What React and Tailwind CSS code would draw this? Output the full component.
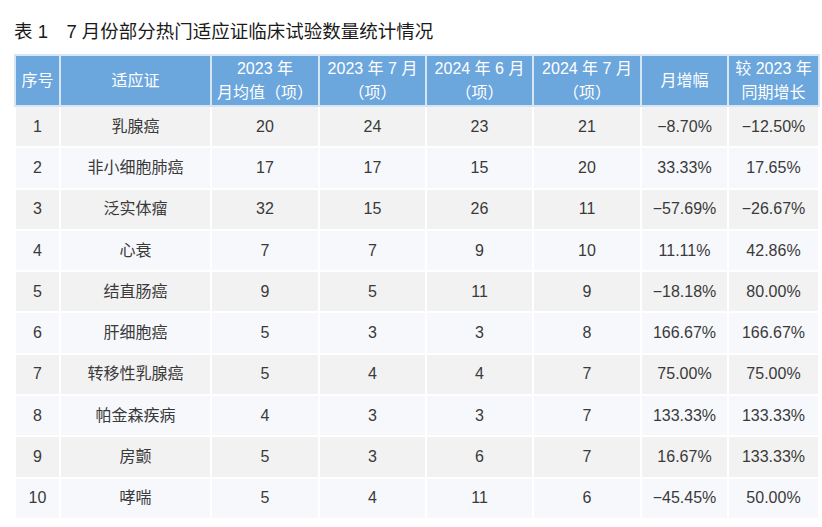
import React from "react";

const rows = [
  ["1", "乳腺癌", "20", "24", "23", "21", "−8.70%", "−12.50%"],
  ["2", "非小细胞肺癌", "17", "17", "15", "20", "33.33%", "17.65%"],
  ["3", "泛实体瘤", "32", "15", "26", "11", "−57.69%", "−26.67%"],
  ["4", "心衰", "7", "7", "9", "10", "11.11%", "42.86%"],
  ["5", "结直肠癌", "9", "5", "11", "9", "−18.18%", "80.00%"],
  ["6", "肝细胞癌", "5", "3", "3", "8", "166.67%", "166.67%"],
  ["7", "转移性乳腺癌", "5", "4", "4", "7", "75.00%", "75.00%"],
  ["8", "帕金森疾病", "4", "3", "3", "7", "133.33%", "133.33%"],
  ["9", "房颤", "5", "3", "6", "7", "16.67%", "133.33%"],
  ["10", "哮喘", "5", "4", "11", "6", "−45.45%", "50.00%"],
];

const widths = [45, 151, 108, 107, 107, 108, 87, 91];

function App() {
  return (
    <div
      className="w-[822px] h-[527px] bg-white overflow-hidden pl-[14px] pr-[4px]"
      style={{ fontFamily: '"Liberation Sans", "Noto Sans CJK SC", sans-serif' }}
    >
      <h1 className="pt-[20px] h-[54px] text-[18.5px] leading-[24px] text-[#1a1a1a] font-normal">
        表 1　7 月份部分热门适应证临床试验数量统计情况
      </h1>
      <table className="table-fixed border-collapse w-[804px] text-[16px]">
        <colgroup>
          {widths.map((w, i) => (
            <col key={i} style={{ width: w }} />
          ))}
        </colgroup>
        <thead>
          <tr className="bg-[#6ba6dd] text-white h-[51px] leading-6">
            <th className="font-normal border-2 border-[#d6e6f5]">序号</th>
            <th className="font-normal border-2 border-[#d6e6f5]">适应证</th>
            <th className="font-normal border-2 border-[#d6e6f5]">2023 年<br />月均值（项）</th>
            <th className="font-normal border-2 border-[#d6e6f5]">2023 年 7 月<br />（项）</th>
            <th className="font-normal border-2 border-[#d6e6f5]">2024 年 6 月<br />（项）</th>
            <th className="font-normal border-2 border-[#d6e6f5]">2024 年 7 月<br />（项）</th>
            <th className="font-normal border-2 border-[#d6e6f5]">月增幅</th>
            <th className="font-normal border-2 border-[#d6e6f5]">较 2023 年<br />同期增长</th>
          </tr>
        </thead>
        <tbody className="text-[#3a3a3a]">
          {rows.map((r, i) => (
            <tr key={i} className={i % 2 === 0 ? "bg-[#f2f2f2] h-[41.3px]" : "bg-[#f7f8fc] h-[41.3px]"}>
              {r.map((c, j) => (
                <td key={j} className="border-2 border-white text-center p-0">
                  {c}
                </td>
              ))}
            </tr>
          ))}
        </tbody>
      </table>
    </div>
  );
}

export default App;
